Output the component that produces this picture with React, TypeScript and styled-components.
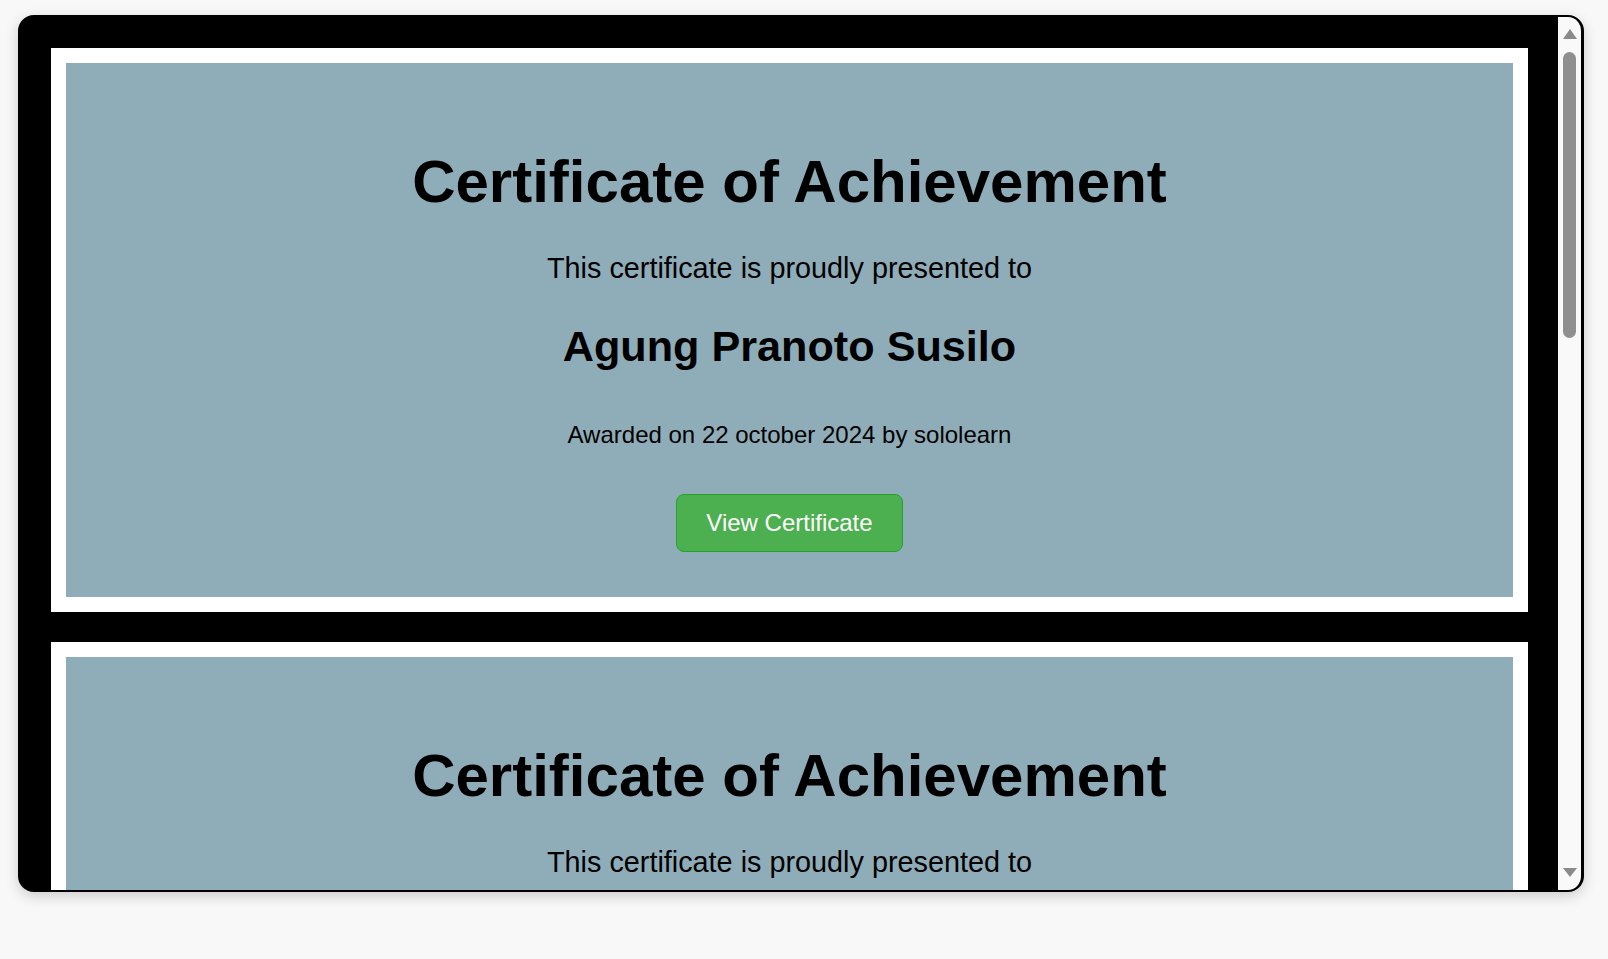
import React from "react";
import styled, { createGlobalStyle } from "styled-components";

const GlobalStyle = createGlobalStyle`
  html, body {
    margin: 0;
    padding: 0;
    background: #f8f8f8;
    font-family: "Liberation Sans", Arial, sans-serif;
  }
`;

const Page = styled.div`
  height: 959px;
  padding: 15px 0 0 18px;
  box-sizing: border-box;
`;

const Frame = styled.div`
  display: flex;
  width: 1566px;
  height: 877px;
  box-sizing: border-box;
  border: 2px solid #000;
  border-right-width: 3px;
  border-radius: 16px;
  overflow: hidden;
  background: #000;
  box-shadow: 0 4px 14px rgba(0, 0, 0, 0.18);
`;

const Viewport = styled.div`
  flex: 1;
  display: flex;
  flex-direction: column;
  gap: 30px;
  padding: 31px 30px 0 31px;
  overflow: hidden;
  background: #000;
`;

const Card = styled.div`
  flex-shrink: 0;
  background: #fff;
  padding: 15px;
`;

const Inner = styled.div`
  display: flex;
  flex-direction: column;
  align-items: center;
  padding: 46px 20px 45px;
  background: #8fadb8;
  color: #000;
  text-align: center;
`;

const Title = styled.h1`
  margin: 38px 0 36px;
  font-size: 60px;
  font-weight: bold;
  line-height: normal;
`;

const Lead = styled.p`
  margin: 0 0 37px;
  font-size: 28.8px;
  line-height: normal;
`;

const Name = styled.h2`
  margin: 0 0 50px;
  font-size: 43.2px;
  font-weight: bold;
  line-height: normal;
`;

const Meta = styled.p`
  margin: 0 0 44.5px;
  font-size: 24px;
  line-height: normal;
`;

const ViewButton = styled.button`
  padding: 14px 29px;
  border: 1px solid #1fa52a;
  border-radius: 8px;
  background: #4caf50;
  color: #fff;
  font-family: "Liberation Sans", Arial, sans-serif;
  font-size: 24px;
  line-height: normal;
  cursor: pointer;
`;

const Scrollbar = styled.div`
  width: 23px;
  flex-shrink: 0;
  display: flex;
  flex-direction: column;
  align-items: center;
  background: #f9f9f9;
`;

const Arrow = styled.div<{ $down?: boolean }>`
  width: 0;
  height: 0;
  border-left: 7.5px solid transparent;
  border-right: 7.5px solid transparent;
  ${(p) =>
    p.$down
      ? `border-top: 9px solid #8a8a8a; margin-top: auto; margin-bottom: 13px;`
      : `border-bottom: 10px solid #8a8a8a; margin-top: 12px;`}
`;

const Thumb = styled.div`
  width: 13px;
  height: 286px;
  margin-top: 13px;
  border-radius: 7px;
  background: #8f8f8f;
`;

const Certificate = ({ name, date, issuer }: { name: string; date: string; issuer: string }) => (
  <Card>
    <Inner>
      <Title>Certificate of Achievement</Title>
      <Lead>This certificate is proudly presented to</Lead>
      <Name>{name}</Name>
      <Meta>
        Awarded on {date} by {issuer}
      </Meta>
      <ViewButton>View Certificate</ViewButton>
    </Inner>
  </Card>
);

const App = () => {
  return (
    <Page>
      <GlobalStyle />
      <Frame>
        <Viewport>
          <Certificate name="Agung Pranoto Susilo" date="22 october 2024" issuer="sololearn" />
          <Certificate name="Agung Pranoto Susilo" date="22 october 2024" issuer="sololearn" />
        </Viewport>
        <Scrollbar>
          <Arrow />
          <Thumb />
          <Arrow $down />
        </Scrollbar>
      </Frame>
    </Page>
  );
};

export default App;
